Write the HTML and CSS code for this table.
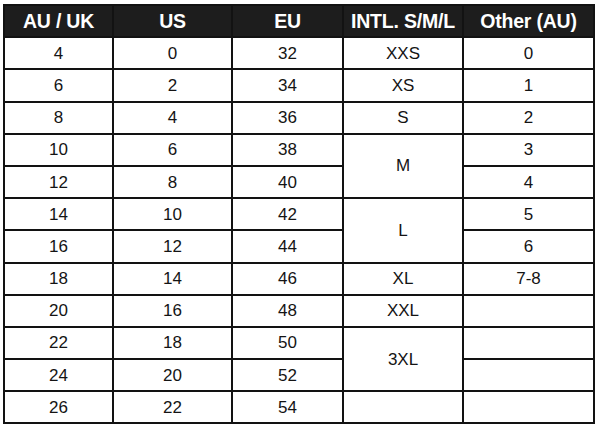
FILE: index.html
```html
<!DOCTYPE html>
<html>
<head>
<meta charset="utf-8">
<link rel="stylesheet" href="styles.css">
</head>
<body>
<table class="size-table">
  <colgroup>
    <col class="c1"><col class="c2"><col class="c3"><col class="c4"><col class="c5">
  </colgroup>
  <thead>
    <tr><th>AU / UK</th><th>US</th><th>EU</th><th>INTL. S/M/L</th><th>Other (AU)</th></tr>
  </thead>
  <tbody>
    <tr><td>4</td><td>0</td><td>32</td><td>XXS</td><td>0</td></tr>
    <tr><td>6</td><td>2</td><td>34</td><td>XS</td><td>1</td></tr>
    <tr><td>8</td><td>4</td><td>36</td><td>S</td><td>2</td></tr>
    <tr><td>10</td><td>6</td><td>38</td><td rowspan="2">M</td><td>3</td></tr>
    <tr><td>12</td><td>8</td><td>40</td><td>4</td></tr>
    <tr><td>14</td><td>10</td><td>42</td><td rowspan="2">L</td><td>5</td></tr>
    <tr><td>16</td><td>12</td><td>44</td><td>6</td></tr>
    <tr><td>18</td><td>14</td><td>46</td><td>XL</td><td>7-8</td></tr>
    <tr><td>20</td><td>16</td><td>48</td><td>XXL</td><td></td></tr>
    <tr><td>22</td><td>18</td><td>50</td><td rowspan="2">3XL</td><td></td></tr>
    <tr><td>24</td><td>20</td><td>52</td><td></td></tr>
    <tr><td>26</td><td>22</td><td>54</td><td></td><td></td></tr>
  </tbody>
</table>
</body>
</html>
```
FILE: styles.css
```css
html, body {
  margin: 0;
  padding: 0;
  background: #ffffff;
}

body {
  padding: 4px 0 0 3px;
  font-family: "Liberation Sans", Arial, sans-serif;
}

.size-table {
  border-collapse: collapse;
  table-layout: fixed;
  width: 592px;
  border: 2px solid #121212;
}

.c1 { width: 109px; }
.c2 { width: 119px; }
.c3 { width: 111px; }
.c4 { width: 120px; }
.c5 { width: 131px; }

.size-table tr {
  height: 32.2px;
}

.size-table th,
.size-table td {
  border: 2px solid #121212;
  padding: 0;
  text-align: center;
  vertical-align: middle;
}

.size-table th {
  background: #1d1d1d;
  color: #ffffff;
  font-weight: bold;
  font-size: 19.5px;
  letter-spacing: -0.2px;
}

.size-table td {
  color: #141414;
  font-size: 17px;
  line-height: 1;
}
```
